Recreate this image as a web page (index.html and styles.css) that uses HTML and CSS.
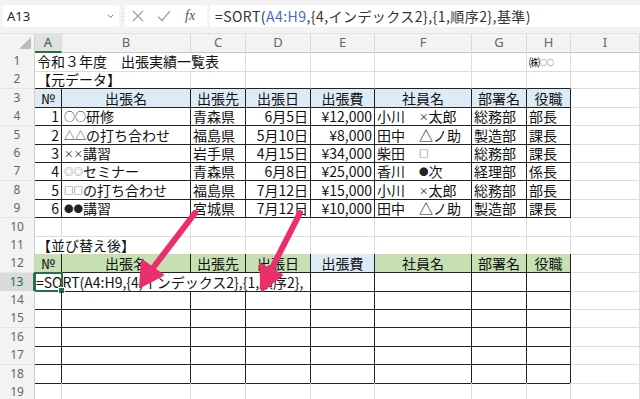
FILE: index.html
```html
<!DOCTYPE html>
<html lang="ja">
<head>
<meta charset="utf-8">
<title>SORT</title>
<link rel="stylesheet" href="styles.css">
</head>
<body>
<div class="app">
  <div class="fbar">
    <div class="namebox">
      <span>A13</span>
      <svg class="chev" width="7" height="5" viewBox="0 0 7 5"><path d="M1 1 L3.5 3.5 L6 1" fill="none" stroke="#777" stroke-width="1"/></svg>
    </div>
    <div class="sep">⋮</div>
    <div class="fbtns">
      <svg width="12" height="12" viewBox="0 0 12 12"><path d="M1 1 L11 11 M11 1 L1 11" stroke="#a0a0a0" stroke-width="1.2" fill="none"/></svg>
      <svg width="14" height="12" viewBox="0 0 14 12"><path d="M1 6.5 L5 10.5 L13 1" stroke="#a0a0a0" stroke-width="1.2" fill="none"/></svg>
      <span class="fx">fx</span>
    </div>
    <div class="finput">=SORT(<span class="ref">A4:H9</span>,{4,インデックス2},{1,順序2},基準)</div>
  </div>

  <div class="sheet">
    <div class="row colhdr">
      <div class="corner"><svg width="12" height="12" viewBox="0 0 12 12"><path d="M12 0 L12 12 L0 12 Z" fill="#bdbdbd"/></svg></div>
      <div class="ch on">A</div><div class="ch">B</div><div class="ch">C</div><div class="ch">D</div><div class="ch">E</div><div class="ch">F</div><div class="ch">G</div><div class="ch">H</div><div class="ch">I</div>
    </div>

    <div class="row">
      <div class="rh">1</div>
      <div class="c span3">令和３年度　出張実績一覧表</div>
      <div class="c"></div><div class="c"></div><div class="c"></div><div class="c"></div>
      <div class="c h1"><span class="kb">㈱</span><span class="oo">○○</span></div><div class="c"></div>
    </div>

    <div class="row">
      <div class="rh">2</div>
      <div class="c span2 tb">【元データ】</div>
      <div class="c tb"></div><div class="c tb"></div><div class="c tb"></div><div class="c tb"></div><div class="c tb"></div><div class="c tb"></div><div class="c"></div>
    </div>

    <div class="row">
      <div class="rh">3</div>
      <div class="c t blue ctr">№</div><div class="c t blue ctr">出張名</div><div class="c t blue ctr">出張先</div><div class="c t blue ctr">出張日</div><div class="c t blue ctr">出張費</div><div class="c t blue ctr">社員名</div><div class="c t blue ctr">部署名</div><div class="c t blue ctr">役職</div><div class="c"></div>
    </div>

    <div class="row">
      <div class="rh">4</div>
      <div class="c t r">1</div><div class="c t"><span class="mid">○○</span>研修</div><div class="c t">青森県</div><div class="c t r">6月5日</div><div class="c t r">¥12,000</div><div class="c t">小川　<span class="hw">×</span>太郎</div><div class="c t">総務部</div><div class="c t">部長</div><div class="c"></div>
    </div>
    <div class="row">
      <div class="rh">5</div>
      <div class="c t r">2</div><div class="c t"><span class="mid">△△</span>の打ち合わせ</div><div class="c t">福島県</div><div class="c t r">5月10日</div><div class="c t r">¥8,000</div><div class="c t">田中　△ノ助</div><div class="c t">製造部</div><div class="c t">課長</div><div class="c"></div>
    </div>
    <div class="row">
      <div class="rh">6</div>
      <div class="c t r">3</div><div class="c t"><span class="hw">××</span>講習</div><div class="c t">岩手県</div><div class="c t r">4月15日</div><div class="c t r">¥34,000</div><div class="c t">柴田　<span class="hw">□</span></div><div class="c t">総務部</div><div class="c t">課長</div><div class="c"></div>
    </div>
    <div class="row">
      <div class="rh">7</div>
      <div class="c t r">4</div><div class="c t"><span class="hw gray">◎◎</span>セミナー</div><div class="c t">青森県</div><div class="c t r">6月8日</div><div class="c t r">¥25,000</div><div class="c t">香川　<span class="hw">●</span>次</div><div class="c t">経理部</div><div class="c t">係長</div><div class="c"></div>
    </div>
    <div class="row">
      <div class="rh">8</div>
      <div class="c t r">5</div><div class="c t"><span class="hw">□□</span>の打ち合わせ</div><div class="c t">福島県</div><div class="c t r">7月12日</div><div class="c t r">¥15,000</div><div class="c t">小川　<span class="hw">×</span>太郎</div><div class="c t">総務部</div><div class="c t">部長</div><div class="c"></div>
    </div>
    <div class="row">
      <div class="rh">9</div>
      <div class="c t r">6</div><div class="c t"><span class="hw">●●</span>講習</div><div class="c t">宮城県</div><div class="c t r">7月12日</div><div class="c t r">¥10,000</div><div class="c t">田中　△ノ助</div><div class="c t">製造部</div><div class="c t">課長</div><div class="c"></div>
    </div>

    <div class="row">
      <div class="rh">10</div>
      <div class="c"></div><div class="c"></div><div class="c"></div><div class="c"></div><div class="c"></div><div class="c"></div><div class="c"></div><div class="c"></div><div class="c"></div>
    </div>

    <div class="row">
      <div class="rh">11</div>
      <div class="c span2 tb">【並び替え後】</div>
      <div class="c tb"></div><div class="c tb"></div><div class="c tb"></div><div class="c tb"></div><div class="c tb"></div><div class="c tb"></div><div class="c"></div>
    </div>

    <div class="row">
      <div class="rh">12</div>
      <div class="c t green ctr">№</div><div class="c t green ctr">出張名</div><div class="c t green ctr">出張先</div><div class="c t green ctr">出張日</div><div class="c t blue ctr">出張費</div><div class="c t green ctr">社員名</div><div class="c t green ctr">部署名</div><div class="c t green ctr">役職</div><div class="c"></div>
    </div>

    <div class="row">
      <div class="rh on">13</div>
      <div class="c t span4 formula">=SORT(A4:H9,{4,インデックス2},{1,順序2},</div>
      <div class="c t"></div><div class="c t"></div><div class="c t"></div><div class="c t"></div><div class="c"></div>
      <div class="active"><span class="handle"></span></div>
    </div>

    <div class="row">
      <div class="rh">14</div>
      <div class="c t"></div><div class="c t"></div><div class="c t"></div><div class="c t"></div><div class="c t"></div><div class="c t"></div><div class="c t"></div><div class="c t"></div><div class="c"></div>
    </div>
    <div class="row">
      <div class="rh">15</div>
      <div class="c t"></div><div class="c t"></div><div class="c t"></div><div class="c t"></div><div class="c t"></div><div class="c t"></div><div class="c t"></div><div class="c t"></div><div class="c"></div>
    </div>
    <div class="row">
      <div class="rh">16</div>
      <div class="c t"></div><div class="c t"></div><div class="c t"></div><div class="c t"></div><div class="c t"></div><div class="c t"></div><div class="c t"></div><div class="c t"></div><div class="c"></div>
    </div>
    <div class="row">
      <div class="rh">17</div>
      <div class="c t"></div><div class="c t"></div><div class="c t"></div><div class="c t"></div><div class="c t"></div><div class="c t"></div><div class="c t"></div><div class="c t"></div><div class="c"></div>
    </div>
    <div class="row">
      <div class="rh">18</div>
      <div class="c t"></div><div class="c t"></div><div class="c t"></div><div class="c t"></div><div class="c t"></div><div class="c t"></div><div class="c t"></div><div class="c t"></div><div class="c"></div>
    </div>
    <div class="row">
      <div class="rh">19</div>
      <div class="c"></div><div class="c"></div><div class="c"></div><div class="c"></div><div class="c"></div><div class="c"></div><div class="c"></div><div class="c"></div><div class="c"></div>
    </div>
  </div>

  <svg class="arrows" width="640" height="399" viewBox="0 0 640 399">
    <g fill="#ec2f6b" stroke="#ec2f6b" stroke-linejoin="round">
      <path d="M195 213 L153 268" stroke-width="6" stroke-linecap="round" fill="none"/>
      <path d="M140 287 L142 260 L163 275 Z" stroke-width="2"/>
      <path d="M300 213 L271 270" stroke-width="6" stroke-linecap="round" fill="none"/>
      <path d="M262 291 L260 264 L282 275 Z" stroke-width="2"/>
    </g>
  </svg>
</div>
</body>
</html>
```

FILE: styles.css
```css
html, body {
  margin: 0;
  padding: 0;
  background: #ffffff;
}
.app {
  position: relative;
  width: 640px;
  height: 399px;
  overflow: hidden;
  font-family: "Noto Sans CJK JP", "Noto Sans", sans-serif;
}

/* formula bar */
.fbar {
  display: flex;
  align-items: stretch;
  height: 34px;
  box-sizing: border-box;
  padding: 5px 0 6px 3px;
  background: #f3f3f3;
  border-bottom: 1px solid #e2e2e2;
}
.namebox {
  width: 116px;
  background: #ffffff;
  display: flex;
  align-items: center;
  justify-content: space-between;
  padding: 0 5px 0 4px;
  box-sizing: border-box;
  font-family: "Noto Sans", sans-serif;
  font-size: 13px;
  color: #222;
}
.sep {
  width: 6px;
  color: #c8c8c8;
  font-size: 11px;
  display: flex;
  align-items: center;
  justify-content: center;
}
.fbtns {
  width: 82px;
  background: #ffffff;
  display: flex;
  align-items: center;
  gap: 13px;
  padding-left: 7px;
  box-sizing: border-box;
}
.fx {
  font-family: "Liberation Serif", serif;
  font-style: italic;
  font-size: 14px;
  color: #555;
  margin-left: 1px;
}
.finput {
  flex: 1;
  margin-left: 3px;
  background: #ffffff;
  display: flex;
  align-items: center;
  padding-left: 5px;
  font-size: 14px;
  letter-spacing: 0.45px;
  color: #333;
  white-space: nowrap;
}
.ref { color: #3b6fc4; }

/* sheet */
.sheet {
  display: flex;
  flex-direction: column;
}
.row {
  display: grid;
  grid-template-columns: 35px 27px 129px 55px 65px 64px 97px 55px 44px 69px;
  height: 18.4px;
  position: relative;
}
.colhdr {
  height: 18px;
  background: #f3f3f3;
}
.corner {
  display: flex;
  align-items: flex-end;
  justify-content: flex-end;
  padding: 0 3px 3px 0;
  border-right: 1px solid #d0d0d0;
  border-bottom: 1px solid #c6c6c6;
}
.ch {
  text-align: center;
  font-family: "Noto Sans", sans-serif;
  font-size: 13px;
  line-height: 17px;
  color: #666;
  border-right: 1px solid #dadada;
  border-bottom: 1px solid #c6c6c6;
}
.ch.on {
  background: #e1e1e1;
  color: #1e6b41;
  border-bottom: 2px solid #217346;
}
.rh {
  background: #f3f3f3;
  text-align: center;
  font-family: "Noto Sans", sans-serif;
  font-size: 12px;
  line-height: 18px;
  color: #666;
  border-right: 1px solid #cfcfcf;
  border-bottom: 1px solid #e6e6e6;
  box-sizing: border-box;
}
.rh.on {
  background: #dadada;
  color: #217346;
  border-right: 2px solid #217346;
}
.c {
  box-sizing: border-box;
  border-right: 1px solid #dcdcdc;
  border-bottom: 1px solid #dcdcdc;
  padding: 0 2px;
  font-size: 14px;
  line-height: 18px;
  color: #111;
  white-space: nowrap;
  overflow: hidden;
}
.span2 { grid-column: span 2; }
.span3 { grid-column: span 3; }
.span4 { grid-column: span 4; }
.tb { border-bottom-color: #222; }
.t {
  border-right-color: #222;
  border-bottom-color: #222;
}
.r { text-align: right; }
.ctr { text-align: center; }
.blue { background: #ddebf7; }
.green { background: #c6e0b4; }
.mid { font-size: 11px; vertical-align: 1px; }
.hw { font-size: 9.5px; vertical-align: 2px; color: #222; }
.gray { color: #777; }
.h1 { overflow: visible; padding-left: 2px; }
.kb { font-size: 11px; }
.oo { font-size: 7px; vertical-align: 2px; }
.formula {
  padding-left: 1px;
  font-size: 14px;
  letter-spacing: 0;
}
.active {
  position: absolute;
  left: 34px;
  top: -1px;
  width: 29px;
  height: 20px;
  box-sizing: border-box;
  border: 2px solid #217346;
}
.handle {
  position: absolute;
  right: -4px;
  bottom: -4px;
  width: 5px;
  height: 5px;
  background: #217346;
  border: 1px solid #fff;
}
.arrows {
  position: absolute;
  left: 0;
  top: 0;
}
```
